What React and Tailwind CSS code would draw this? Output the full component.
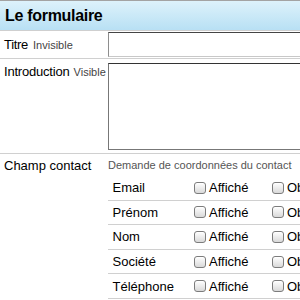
import React from "react";

const Box = () => (
  <span className="inline-block w-[12px] h-[12px] rounded-[3px] border border-[#7c7c7c] bg-gradient-to-b from-[#ffffff] to-[#d9d9d9] shadow-[inset_0_1px_0_#fff] shrink-0" />
);

const fields = ["Email", "Prénom", "Nom", "Société", "Téléphone"];

export default function App() {
  return (
    <div className="w-[300px] h-[300px] overflow-hidden bg-white text-black font-['Liberation_Sans',Arial,sans-serif]">
      <div className="w-[440px]">
        <div className="h-[31px] border-t border-t-[#a3a3a3] border-b border-b-[#cfcfcf] bg-gradient-to-b from-[#ddf2fb] to-[#b8e0f4] pl-[5px] flex items-center text-[16px] font-bold leading-[18px] tracking-[-0.3px]">
          Le formulaire
        </div>

        <div className="h-[28px] border-b border-b-[#d0d0d0] flex">
          <div className="w-[108px] pl-[4px] self-center flex items-baseline leading-[15px]">
            <span className="text-[13px] tracking-[-0.3px]">Titre</span>
            <span className="text-[11px] text-[#444] ml-[5px]">Invisible</span>
          </div>
          <div className="mt-[1px] h-[25px] flex-1 border border-t-[#454545] border-x-[#8e8e8e] border-b-[#c8c8c8] bg-white" />
        </div>

        <div className="h-[95px] border-b border-b-[#d0d0d0] flex">
          <div className="w-[108px] pl-[4px] pt-[5px] flex items-baseline leading-[15px] self-start">
            <span className="text-[13px] tracking-[-0.2px]">Introduction</span>
            <span className="text-[11px] text-[#444] ml-[4px]">Visible</span>
          </div>
          <div className="mt-[4px] h-[87px] flex-1 border border-t-[#333] border-x-[#777] border-b-[#777] bg-white" />
        </div>

        <div className="flex">
          <div className="w-[108px] pl-[4px] pt-[4px] leading-[15px] text-[13px]">
            Champ contact
          </div>
          <div className="flex-1 flex flex-col">
            <div className="h-[22px] pt-[5px] text-[11px] leading-[13px] text-[#555]">
              Demande de coordonnées du contact
            </div>
            {fields.map((f) => (
              <div
                key={f}
                className="h-[24.6px] border-b border-b-[#d0d0d0] flex items-center text-[13px] leading-[15px]"
              >
                <div className="w-[82px] pl-[4.5px]">{f}</div>
                <div className="w-[78px] flex items-center pl-[4px]">
                  <Box />
                  <span className="ml-[3px]">Affiché</span>
                </div>
                <div className="flex items-center pl-[4px]">
                  <Box />
                  <span className="ml-[3px]">Obligatoire</span>
                </div>
              </div>
            ))}
          </div>
        </div>
      </div>
    </div>
  );
}
